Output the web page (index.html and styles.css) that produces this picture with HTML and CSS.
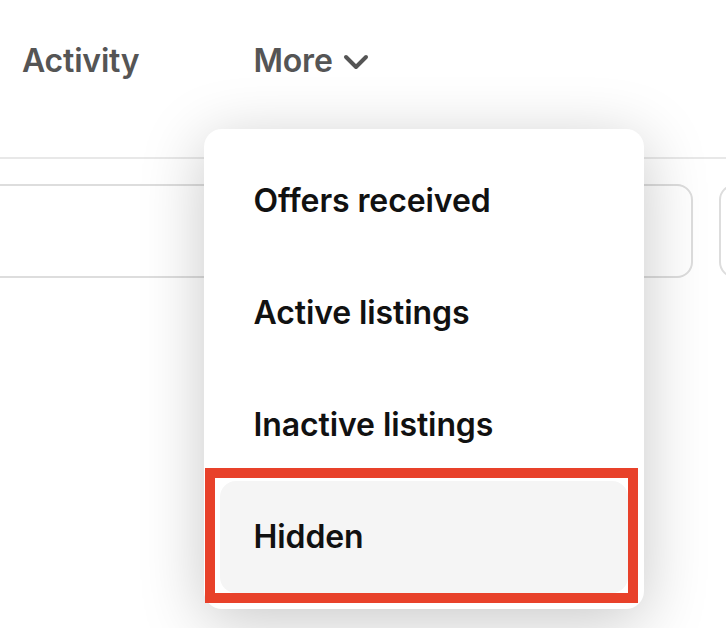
FILE: index.html
```html
<!DOCTYPE html>
<html lang="en">
<head>
  <meta charset="UTF-8" />
  <title>Listings</title>
  <link rel="stylesheet" href="styles.css">
</head>
<body>
  <nav class="tabs">
    <a class="tab">Activity</a>
    <div class="tab more">
      <span>More</span>
      <svg class="chevron" width="26" height="16" viewBox="0 0 26 16">
        <path d="M3 3 L13 13 L23 3" fill="none" stroke="#555" stroke-width="4" stroke-linecap="round" stroke-linejoin="round"/>
      </svg>

      <div class="menu">
        <div class="menu-item">Offers received</div>
        <div class="menu-item">Active listings</div>
        <div class="menu-item">Inactive listings</div>
        <div class="menu-item selected">Hidden</div>
        <div class="highlight"></div>
      </div>
    </div>
  </nav>

  <div class="toolbar">
    <div class="search"></div>
    <div class="filter"></div>
  </div>
</body>
</html>
```

FILE: styles.css
```css
* {
  margin: 0;
  padding: 0;
  box-sizing: border-box;
}
body {
  font-family: Inter, 'Noto Sans', sans-serif;
  background: #fff;
  width: 726px;
  height: 628px;
  overflow: hidden;
}
.tabs {
  display: flex;
  align-items: flex-start;
  gap: 114px;
  height: 159px;
  padding: 41px 0 0 22px;
  border-bottom: 2px solid #e8e8e8;
}
.tab {
  font-size: 32px;
  line-height: 40px;
  font-weight: 600;
  color: #555;
  letter-spacing: -0.2px;
}
.more {
  position: relative;
  display: flex;
  align-items: center;
  gap: 10px;
}
.chevron {
  margin-top: 1px;
}
.menu {
  position: absolute;
  top: 88px;
  left: -49px;
  width: 440px;
  padding: 16px;
  background: #fff;
  border-radius: 18px;
  box-shadow: 0 12px 64px rgba(0, 0, 0, 0.22);
  z-index: 10;
}
.menu-item {
  height: 112px;
  display: flex;
  align-items: center;
  padding: 0 33px;
  border-radius: 16px;
  font-size: 32px;
  font-weight: 600;
  color: #111;
  letter-spacing: -0.1px;
}
.menu-item.selected {
  background: #f5f5f5;
}
.highlight {
  position: absolute;
  left: 1px;
  top: 339px;
  width: 433px;
  height: 135px;
  border: 10px solid #e8412a;
}
.toolbar {
  display: flex;
  gap: 26px;
  margin: 25px 0 0 -40px;
}
.search {
  width: 733px;
  flex-shrink: 0;
  height: 94px;
  border: 2px solid #ddd;
  border-radius: 16px;
}
.filter {
  width: 94px;
  flex-shrink: 0;
  height: 94px;
  border: 2px solid #ddd;
  border-radius: 16px;
}
```
